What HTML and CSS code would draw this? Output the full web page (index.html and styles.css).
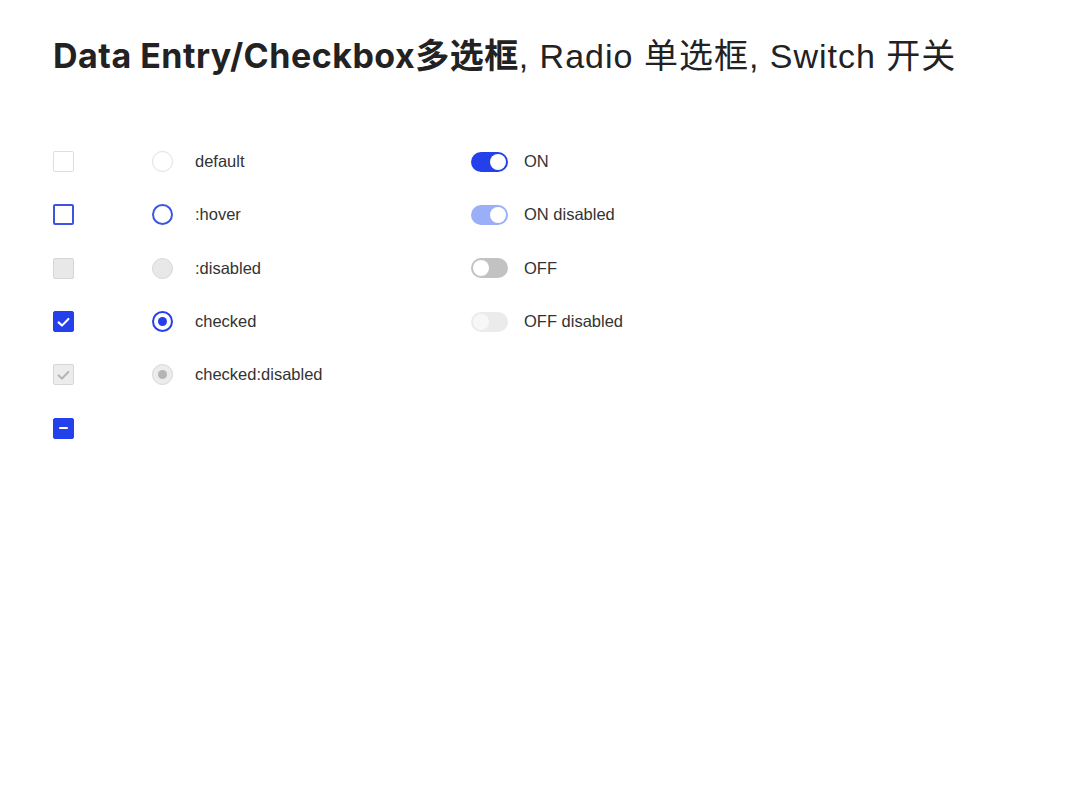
FILE: index.html
```html
<!DOCTYPE html>
<html lang="zh">
<head>
<meta charset="utf-8">
<title>Data Entry</title>
<link rel="stylesheet" href="styles.css">
</head>
<body>
<div class="page">
  <h1 class="title"><span class="title-bold">Data Entry/Checkbox多选框</span><span class="title-reg">, Radio 单选框, Switch 开关</span></h1>
  <div class="board">
    <div class="col col-check">
      <div class="row"><span class="cb"></span></div>
      <div class="row"><span class="cb cb-hover"></span></div>
      <div class="row"><span class="cb cb-disabled"></span></div>
      <div class="row"><span class="cb cb-checked"><svg viewBox="0 0 20 20" width="20" height="20"><path d="M4.8 10.4 L8.4 13.8 L15.2 6.8" fill="none" stroke="#fff" stroke-width="2.2" stroke-linecap="round" stroke-linejoin="round"/></svg></span></div>
      <div class="row"><span class="cb cb-checked-disabled"><svg viewBox="0 0 20 20" width="20" height="20"><path d="M4.8 10.4 L8.4 13.8 L15.2 6.8" fill="none" stroke="#b0b0b0" stroke-width="2" stroke-linecap="round" stroke-linejoin="round"/></svg></span></div>
      <div class="row"><span class="cb cb-checked"><span class="dash"></span></span></div>
    </div>
    <div class="col col-radio">
      <div class="row"><span class="rd"></span><span class="label">default</span></div>
      <div class="row"><span class="rd rd-hover"></span><span class="label">:hover</span></div>
      <div class="row"><span class="rd rd-disabled"></span><span class="label">:disabled</span></div>
      <div class="row"><span class="rd rd-checked"><span class="dot"></span></span><span class="label">checked</span></div>
      <div class="row"><span class="rd rd-checked-disabled"><span class="dot"></span></span><span class="label">checked:disabled</span></div>
    </div>
    <div class="col col-switch">
      <div class="row"><span class="sw sw-on"><span class="knob"></span></span><span class="label">ON</span></div>
      <div class="row"><span class="sw sw-on-disabled"><span class="knob"></span></span><span class="label">ON disabled</span></div>
      <div class="row"><span class="sw sw-off"><span class="knob"></span></span><span class="label">OFF</span></div>
      <div class="row"><span class="sw sw-off-disabled"><span class="knob"></span></span><span class="label">OFF disabled</span></div>
    </div>
  </div>
</div>
</body>
</html>
```

FILE: styles.css
```css
html, body {
  margin: 0;
  padding: 0;
  background: #ffffff;
}

.page {
  padding: 35px 0 0 53px;
  font-family: "Liberation Sans", "Noto Sans CJK SC", sans-serif;
  color: #333333;
}

.title {
  margin: 0;
  font-size: 34px;
  line-height: 42px;
  color: #222222;
  white-space: nowrap;
}

.title-bold {
  font-family: "Inter", "Noto Sans CJK SC", sans-serif;
  font-weight: 700;
  letter-spacing: 0.5px;
}

.title-reg {
  font-family: "Liberation Sans", "Noto Sans CJK SC", sans-serif;
  font-weight: 400;
  letter-spacing: 1px;
}

.board {
  display: flex;
  margin-top: 58px;
}

.col {
  display: flex;
  flex-direction: column;
}

.col-check {
  width: 99px;
}

.col-radio {
  width: 319px;
}

.row {
  height: 53.3px;
  display: flex;
  align-items: center;
}

.label {
  font-size: 16.5px;
  color: #333333;
}

/* Checkbox */
.cb {
  box-sizing: border-box;
  width: 21px;
  height: 21px;
  border: 1px solid #dedede;
  border-radius: 2px;
  background: #ffffff;
  display: flex;
  align-items: center;
  justify-content: center;
}

.cb-hover {
  border: 2px solid #3d55de;
}

.cb-disabled {
  background: #e8e8e8;
  border-color: #d6d6d6;
}

.cb-checked {
  background: #2440ea;
  border-color: #2440ea;
}

.cb-checked-disabled {
  background: #ececec;
  border-color: #d6d6d6;
}

.dash {
  width: 9px;
  height: 2px;
  background: #ffffff;
  border-radius: 1px;
}

/* Radio */
.col-radio .rd {
  margin-right: 22px;
}

.rd {
  box-sizing: border-box;
  width: 21px;
  height: 21px;
  border-radius: 50%;
  border: 1px solid #dedede;
  background: #ffffff;
  display: flex;
  align-items: center;
  justify-content: center;
  flex: none;
}

.rd-hover {
  border: 2px solid #3d55de;
}

.rd-disabled {
  background: #e8e8e8;
  border-color: #d6d6d6;
}

.rd-checked {
  border: 2px solid #2440ea;
}

.rd-checked .dot {
  width: 9px;
  height: 9px;
  border-radius: 50%;
  background: #2440ea;
}

.rd-checked-disabled {
  background: #ececec;
  border: 1.5px solid #d6d6d6;
}

.rd-checked-disabled .dot {
  width: 9px;
  height: 9px;
  border-radius: 50%;
  background: #b5b5b5;
}

/* Switch */
.sw {
  box-sizing: border-box;
  width: 37px;
  height: 20px;
  border-radius: 10px;
  padding: 2px;
  display: flex;
  align-items: center;
  margin-right: 16px;
  flex: none;
}

.knob {
  width: 16px;
  height: 16px;
  border-radius: 50%;
  background: #ffffff;
}

.sw-on {
  background: #2440ea;
  justify-content: flex-end;
}

.sw-on-disabled {
  background: #9aaff7;
  justify-content: flex-end;
}

.sw-off {
  background: #c2c2c2;
  justify-content: flex-start;
}

.sw-off-disabled {
  background: #ebebeb;
  justify-content: flex-start;
}

.sw-off-disabled .knob {
  background: #f7f7f7;
}
```
